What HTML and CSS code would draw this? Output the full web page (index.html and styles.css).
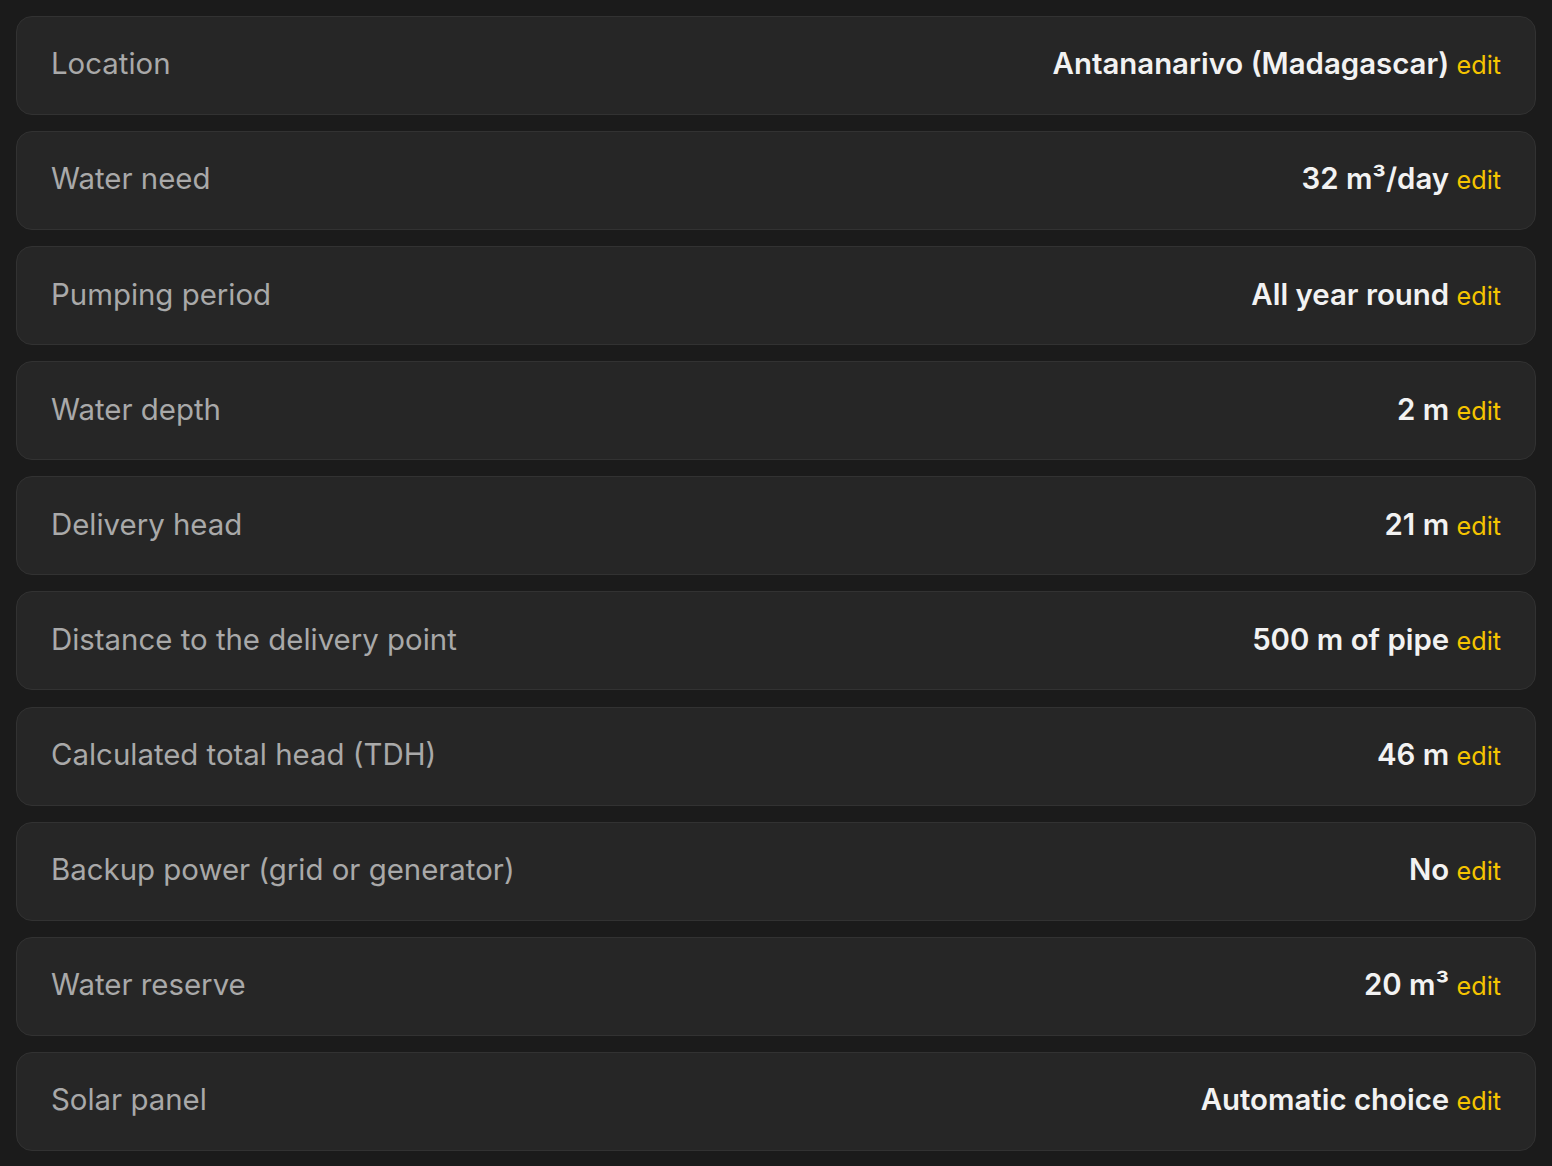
FILE: index.html
```html
<!DOCTYPE html>
<html lang="en">
  <head>
    <meta charset="UTF-8" />
    <meta name="viewport" content="width=device-width, initial-scale=1.0" />
    <title>Pump sizing summary</title>
    <link rel="stylesheet" href="styles.css">
  </head>
  <body>
    <div class="summary">
      <div class="row">
        <span class="label">Location</span>
        <span class="value">Antananarivo (Madagascar) <a class="edit" href="#">edit</a></span>
      </div>
      <div class="row">
        <span class="label">Water need</span>
        <span class="value">32 m³/day <a class="edit" href="#">edit</a></span>
      </div>
      <div class="row">
        <span class="label">Pumping period</span>
        <span class="value">All year round <a class="edit" href="#">edit</a></span>
      </div>
      <div class="row">
        <span class="label">Water depth</span>
        <span class="value">2 m <a class="edit" href="#">edit</a></span>
      </div>
      <div class="row">
        <span class="label">Delivery head</span>
        <span class="value">21 m <a class="edit" href="#">edit</a></span>
      </div>
      <div class="row">
        <span class="label">Distance to the delivery point</span>
        <span class="value">500 m of pipe <a class="edit" href="#">edit</a></span>
      </div>
      <div class="row">
        <span class="label">Calculated total head (TDH)</span>
        <span class="value">46 m <a class="edit" href="#">edit</a></span>
      </div>
      <div class="row">
        <span class="label">Backup power (grid or generator)</span>
        <span class="value">No <a class="edit" href="#">edit</a></span>
      </div>
      <div class="row">
        <span class="label">Water reserve</span>
        <span class="value">20 m³ <a class="edit" href="#">edit</a></span>
      </div>
      <div class="row">
        <span class="label">Solar panel</span>
        <span class="value">Automatic choice <a class="edit" href="#">edit</a></span>
      </div>
    </div>
  </body>
</html>
```

FILE: styles.css
```css
body {
  font-family: Inter, "Noto Sans", sans-serif;
  background-color: #1b1b1b;
  color: #f2f2f2;
  margin: 0;
  padding: 16px;
}

.summary {
  display: flex;
  flex-direction: column;
  gap: 16.1px;
}

.row {
  box-sizing: border-box;
  height: 99px;
  display: flex;
  justify-content: space-between;
  align-items: center;
  padding: 0 34px 3px;
  line-height: 1.2;
  background-color: #262626;
  border: 1px solid #323232;
  border-radius: 16px;
}

.label {
  font-size: 29.4px;
  color: #a9a9a9;
}

.value {
  font-size: 29.4px;
  font-weight: 600;
  color: #f2f2f2;
}

.edit {
  font-size: 25.2px;
  font-weight: 400;
  color: #f5c400;
  text-decoration: none;
}
```
